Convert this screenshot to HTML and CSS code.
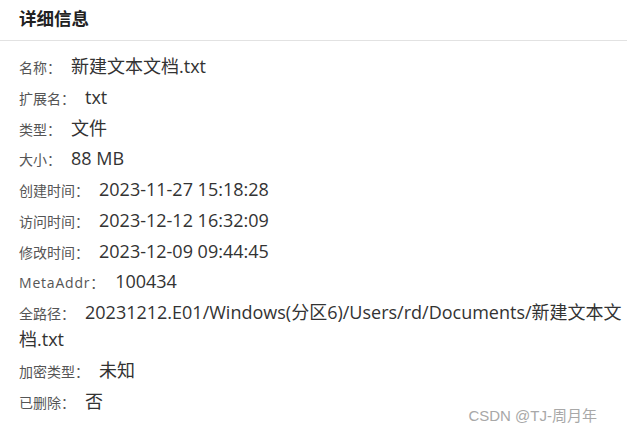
FILE: index.html
```html
<!DOCTYPE html>
<html lang="zh-CN">
<head>
<meta charset="utf-8">
<link rel="stylesheet" href="styles.css">
</head>
<body>
<div class="panel">
  <div class="header">详细信息</div>
  <div class="body">
    <div class="row"><span class="label">名称：</span><span class="value">新建文本文档.txt</span></div>
    <div class="row"><span class="label">扩展名：</span><span class="value">txt</span></div>
    <div class="row"><span class="label">类型：</span><span class="value">文件</span></div>
    <div class="row"><span class="label">大小：</span><span class="value">88 MB</span></div>
    <div class="row"><span class="label">创建时间：</span><span class="value">2023-11-27 15:18:28</span></div>
    <div class="row"><span class="label">访问时间：</span><span class="value">2023-12-12 16:32:09</span></div>
    <div class="row"><span class="label">修改时间：</span><span class="value">2023-12-09 09:44:45</span></div>
    <div class="row"><span class="label latin">MetaAddr：</span><span class="value">100434</span></div>
    <div class="row"><span class="label">全路径：</span><span class="value">20231212.E01/Windows(分区6)/Users/rd/Documents/新建文本文档.txt</span></div>
    <div class="row"><span class="label">加密类型：</span><span class="value">未知</span></div>
    <div class="row"><span class="label">已删除：</span><span class="value">否</span></div>
  </div>
  <div class="watermark">CSDN @TJ-周月年</div>
</div>
</body>
</html>
```

FILE: styles.css
```css
html, body {
  margin: 0;
  padding: 0;
  background: #fff;
}
body {
  font-family: "Open Sans", "Noto Sans CJK SC", sans-serif;
  color: #333;
}
.panel {
  position: relative;
  width: 627px;
  height: 435px;
}
.header {
  height: 40px;
  line-height: 36px;
  padding-left: 19px;
  font-size: 17.5px;
  font-weight: bold;
  color: #222;
  font-family: "Noto Sans CJK SC", sans-serif;
  border-bottom: 1px solid #e2e2e2;
}
.body {
  padding: 13px 2px 0 19px;
}
.row {
  font-size: 14px;
  line-height: 27px;
  margin-bottom: 3.75px;
  word-break: break-all;
}
.label {
  font-size: 14px;
  line-height: 1;
  color: #555;
  margin-right: 10px;
}
.label.latin {
  letter-spacing: 0.8px;
}
.value {
  font-size: 18px;
  line-height: 1;
  color: #333;
}
.watermark {
  position: absolute;
  right: 30px;
  bottom: 10px;
  font-family: "Liberation Sans", "Noto Sans CJK SC", sans-serif;
  font-size: 15px;
  color: #a8a8a8;
}
```
